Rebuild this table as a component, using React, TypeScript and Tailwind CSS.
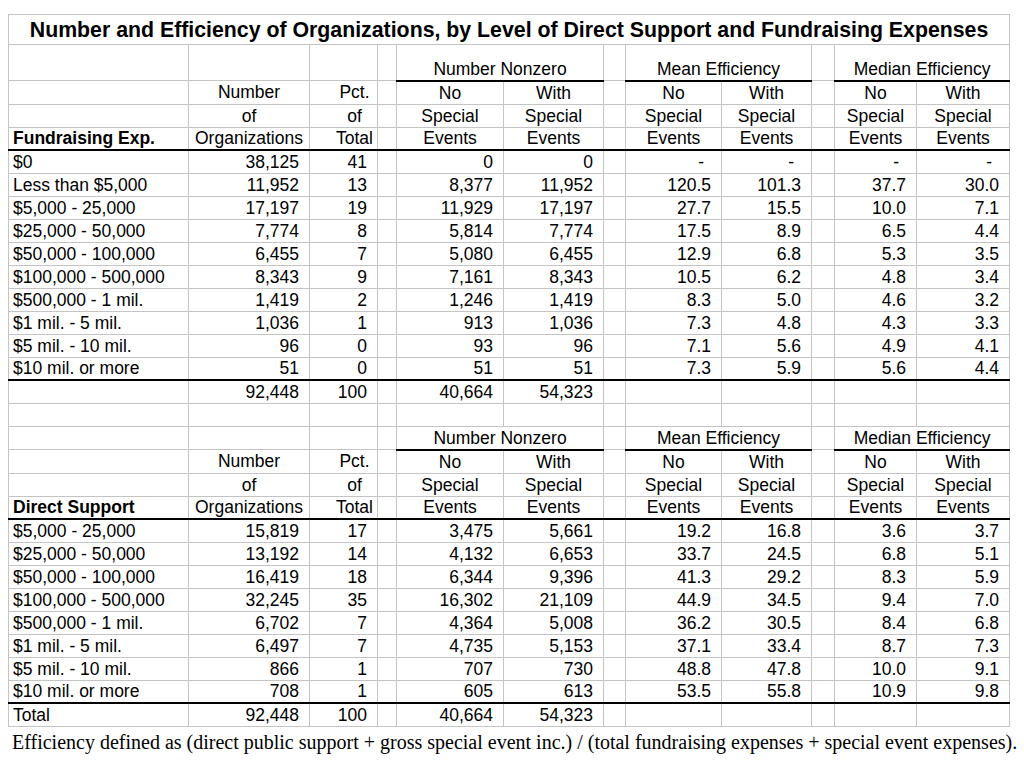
import React from 'react';

type Row = string[];

const fundraising: Row[] = [
  ['$0', '38,125', '41', '0', '0', '-', '-', '-', '-'],
  ['Less than $5,000', '11,952', '13', '8,377', '11,952', '120.5', '101.3', '37.7', '30.0'],
  ['$5,000 - 25,000', '17,197', '19', '11,929', '17,197', '27.7', '15.5', '10.0', '7.1'],
  ['$25,000 - 50,000', '7,774', '8', '5,814', '7,774', '17.5', '8.9', '6.5', '4.4'],
  ['$50,000 - 100,000', '6,455', '7', '5,080', '6,455', '12.9', '6.8', '5.3', '3.5'],
  ['$100,000 - 500,000', '8,343', '9', '7,161', '8,343', '10.5', '6.2', '4.8', '3.4'],
  ['$500,000 - 1 mil.', '1,419', '2', '1,246', '1,419', '8.3', '5.0', '4.6', '3.2'],
  ['$1 mil. - 5 mil.', '1,036', '1', '913', '1,036', '7.3', '4.8', '4.3', '3.3'],
  ['$5 mil. - 10 mil.', '96', '0', '93', '96', '7.1', '5.6', '4.9', '4.1'],
  ['$10 mil. or more', '51', '0', '51', '51', '7.3', '5.9', '5.6', '4.4'],
];

const direct: Row[] = [
  ['$5,000 - 25,000', '15,819', '17', '3,475', '5,661', '19.2', '16.8', '3.6', '3.7'],
  ['$25,000 - 50,000', '13,192', '14', '4,132', '6,653', '33.7', '24.5', '6.8', '5.1'],
  ['$50,000 - 100,000', '16,419', '18', '6,344', '9,396', '41.3', '29.2', '8.3', '5.9'],
  ['$100,000 - 500,000', '32,245', '35', '16,302', '21,109', '44.9', '34.5', '9.4', '7.0'],
  ['$500,000 - 1 mil.', '6,702', '7', '4,364', '5,008', '36.2', '30.5', '8.4', '6.8'],
  ['$1 mil. - 5 mil.', '6,497', '7', '4,735', '5,153', '37.1', '33.4', '8.7', '7.3'],
  ['$5 mil. - 10 mil.', '866', '1', '707', '730', '48.8', '47.8', '10.0', '9.1'],
  ['$10 mil. or more', '708', '1', '605', '613', '53.5', '55.8', '10.9', '9.8'],
];

// column widths, spreadsheet style (A..L)
const widths = [180, 121, 68, 19, 107, 100, 22, 96, 90, 23, 82, 93];
const widthClass = [
  'w-[180px]', 'w-[121px]', 'w-[68px]', 'w-[19px]', 'w-[107px]', 'w-[100px]',
  'w-[22px]', 'w-[96px]', 'w-[90px]', 'w-[23px]', 'w-[82px]', 'w-[93px]',
];

const td = 'border border-[#c4c4c4] p-0 whitespace-nowrap overflow-hidden';
// 2px rule under a row: shave a pixel off the line so the pitch stays 23px
const thick = 'border-b-2 border-b-black leading-[21px]';

function Num({ v, last }: { v: string; last?: boolean }) {
  const isDash = v === '-';
  return (
    <td className={`${td} text-right ${isDash ? 'pr-[17px]' : 'pr-[10px]'} ${last ? thick : ''}`}>{v}</td>
  );
}

function DataRow({ r, last }: { r: Row; last?: boolean }) {
  const b = last ? thick : '';
  return (
    <tr>
      <td className={`${td} pl-[4px] ${b}`}>{r[0] || '\u00a0'}</td>
      <Num v={r[1]} last={last} />
      <Num v={r[2]} last={last} />
      <td className={`${td} ${b}`} />
      <Num v={r[3]} last={last} />
      <Num v={r[4]} last={last} />
      <td className={`${td} ${b}`} />
      <Num v={r[5]} last={last} />
      <Num v={r[6]} last={last} />
      <td className={`${td} ${b}`} />
      <Num v={r[7]} last={last} />
      <Num v={r[8]} last={last} />
    </tr>
  );
}

function Header({ label, tall }: { label: string; tall?: boolean }) {
  const group = `${td} text-center align-bottom border-b-2 border-b-black`;
  const lines: [string, string, string][] = [
    ['Number', 'Pct.', 'No'],
    ['of', 'of', 'Special'],
    ['Organizations', 'Total', 'Events'],
  ];
  return (
    <>
      <tr className={tall ? 'h-[36px]' : ''}>
        <td className={td}>{'\u00a0'}</td>
        <td className={td} />
        <td className={td} />
        <td className={td} />
        <td colSpan={2} className={group}>Number Nonzero</td>
        <td className={td} />
        <td colSpan={2} className={group}>Mean Efficiency</td>
        <td className={td} />
        <td colSpan={2} className={group}>Median Efficiency</td>
      </tr>
      {lines.map(([b, c, e], i) => {
        const last = i === 2;
        const x = last ? thick : '';
        const w = i === 0 ? 'With' : e;
        return (
          <tr key={i}>
            <td className={`${td} pl-[4px] font-bold ${x}`}>{last ? label : '\u00a0'}</td>
            <td className={`${td} text-center ${x}`}>{b}</td>
            <td className={`${td} text-center pl-[22px] ${x}`}>{c}</td>
            <td className={`${td} ${x}`} />
            <td className={`${td} text-center ${x}`}>{e}</td>
            <td className={`${td} text-center ${x}`}>{w}</td>
            <td className={`${td} ${x}`} />
            <td className={`${td} text-center ${x}`}>{e}</td>
            <td className={`${td} text-center ${x}`}>{w}</td>
            <td className={`${td} ${x}`} />
            <td className={`${td} text-center ${x}`}>{e}</td>
            <td className={`${td} text-center ${x}`}>{w}</td>
          </tr>
        );
      })}
    </>
  );
}

function TotalRow({ label }: { label: string }) {
  return <DataRow r={[label, '92,448', '100', '40,664', '54,323', '', '', '', '']} />;
}

export default function App() {
  return (
    <div className="w-[1024px] h-[768px] bg-white text-black pt-[14px] pl-[8px] overflow-hidden">
      <table
        className="table-fixed border-collapse w-[1001px] text-[17.5px] leading-[22px]"
        style={{ fontFamily: '"Liberation Sans", Arial, sans-serif' }}
      >
        <colgroup>
          {widths.map((_, i) => (
            <col key={i} className={widthClass[i]} />
          ))}
        </colgroup>
        <tbody>
          <tr className="h-[30px]">
            <td colSpan={12} className={`${td} text-center font-bold text-[21.3px]`}>
              Number and Efficiency of Organizations, by Level of Direct Support and Fundraising Expenses
            </td>
          </tr>
          <Header label="Fundraising Exp." tall />
          {fundraising.map((r, i) => (
            <DataRow key={i} r={r} last={i === fundraising.length - 1} />
          ))}
          <TotalRow label="" />
          <tr>
            {widths.map((_, i) => (
              <td key={i} className={td}>{i === 0 ? '\u00a0' : ''}</td>
            ))}
          </tr>
          <Header label="Direct Support" />
          {direct.map((r, i) => (
            <DataRow key={i} r={r} last={i === direct.length - 1} />
          ))}
          <TotalRow label="Total" />
        </tbody>
      </table>
      <p
        className="mt-[3px] pl-[4px] text-[20px] leading-[24px] whitespace-nowrap"
        style={{ fontFamily: '"Liberation Serif", "Times New Roman", serif' }}
      >
        Efficiency defined as (direct public support + gross special event inc.) / (total fundraising expenses + special event expenses).
      </p>
    </div>
  );
}
